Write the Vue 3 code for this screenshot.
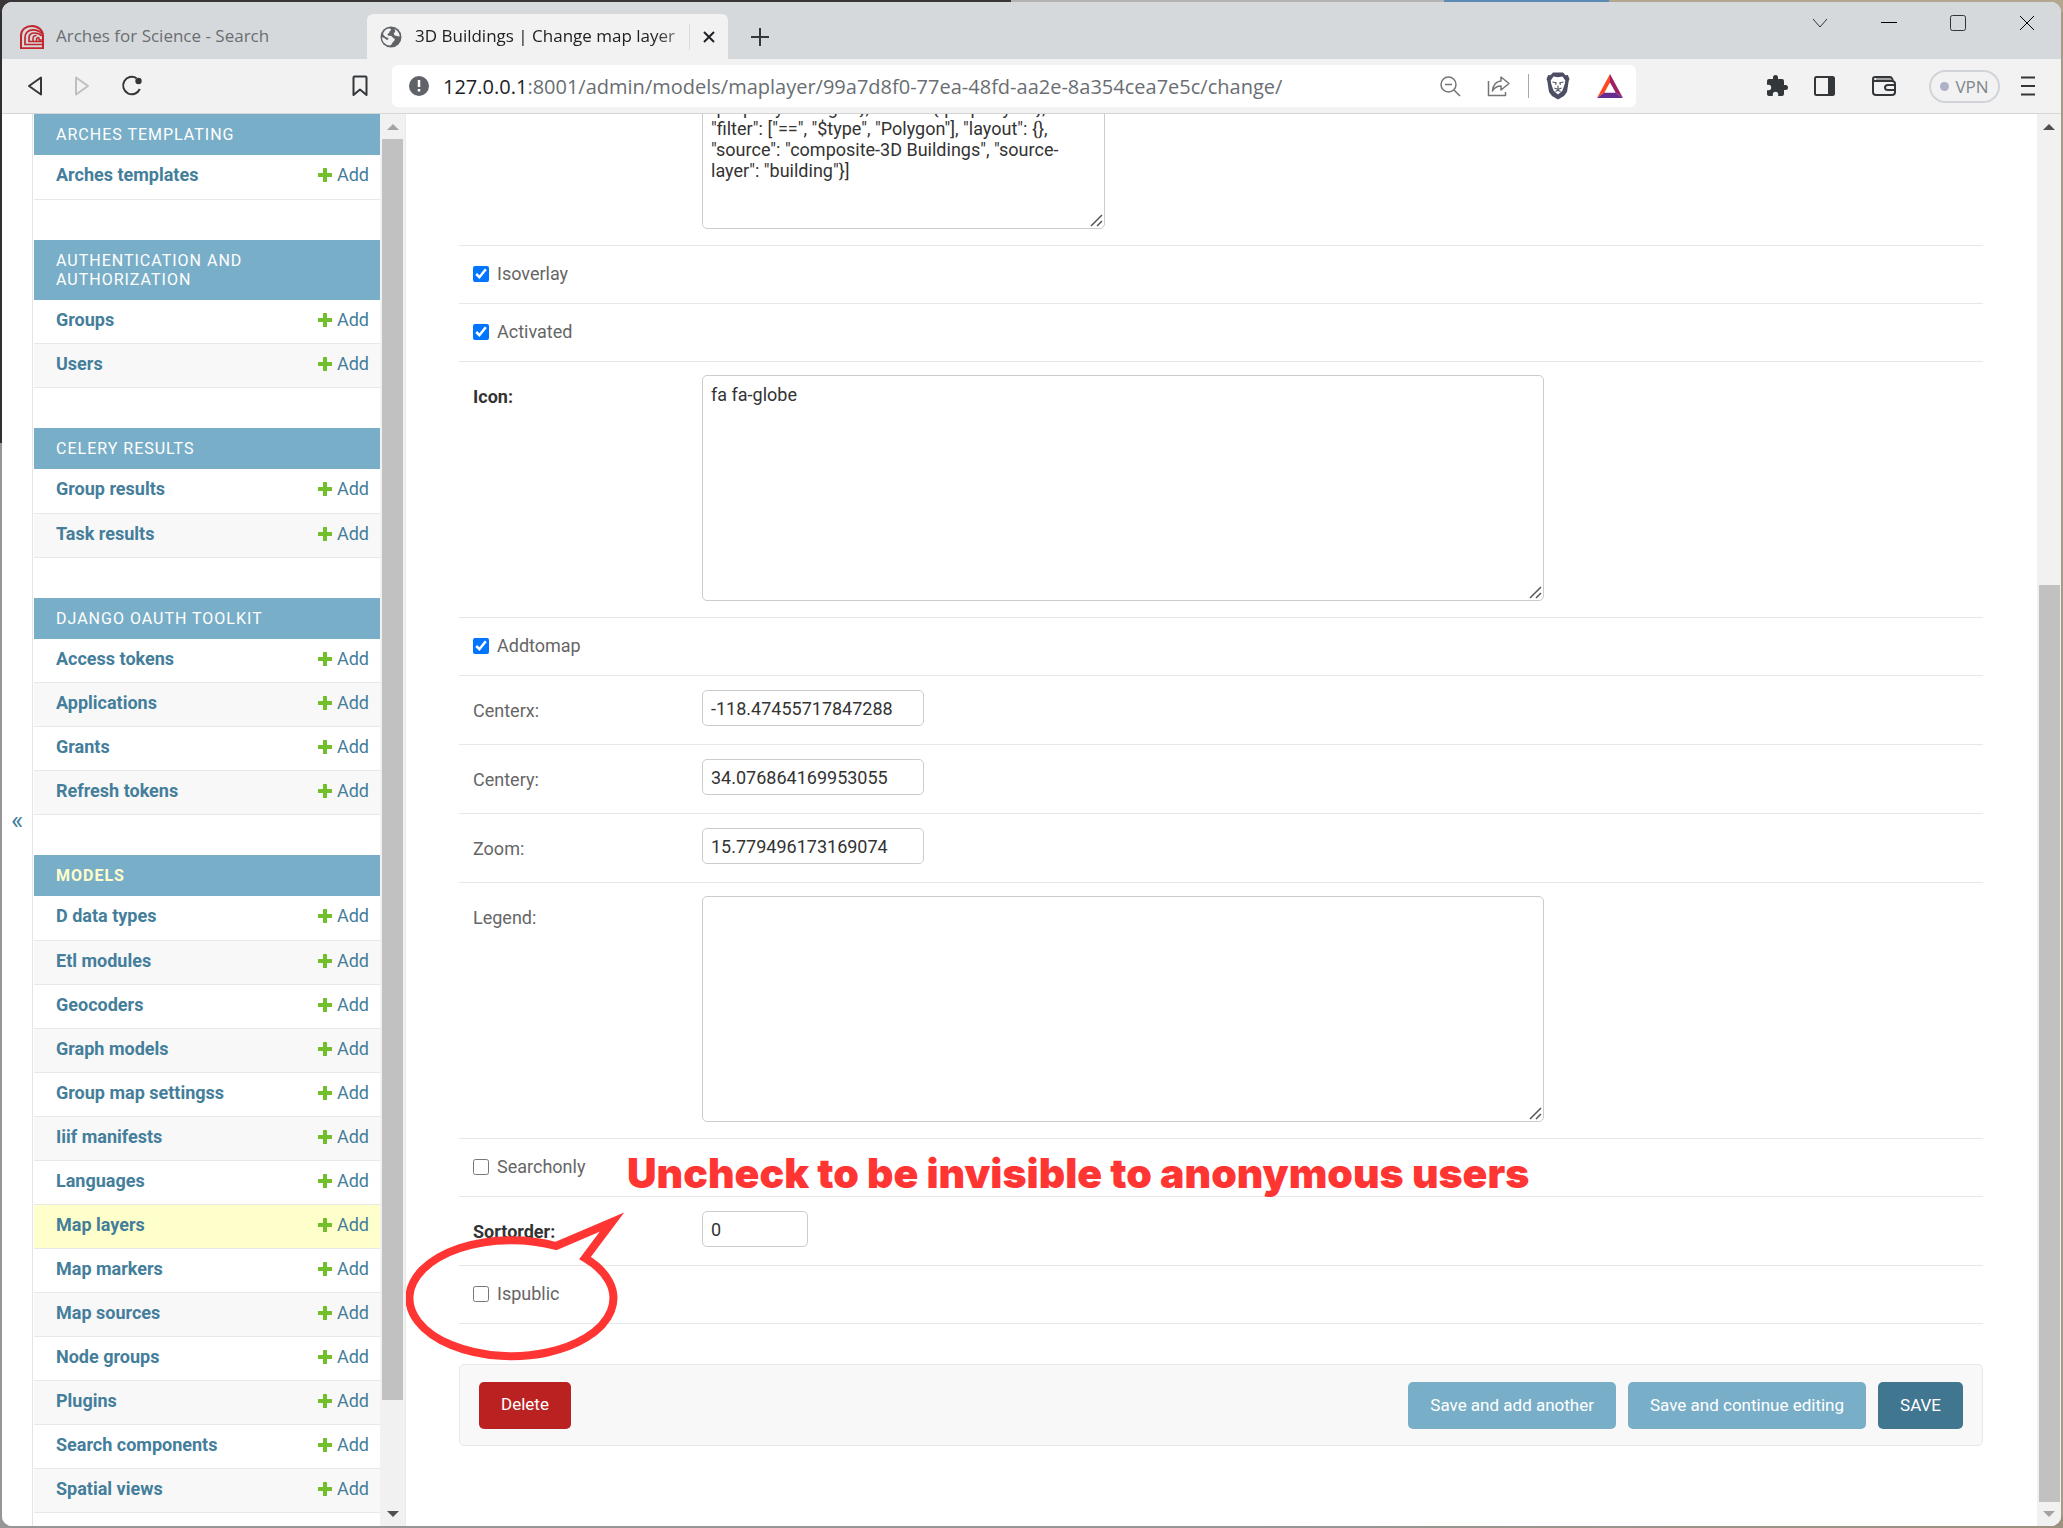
<script setup>
const modules = [
  { name: 'Arches templating', models: ['Arches templates'] },
  { name: 'Authentication and Authorization', models: ['Groups', 'Users'] },
  { name: 'Celery Results', models: ['Group results', 'Task results'] },
  { name: 'Django OAuth Toolkit', models: ['Access tokens', 'Applications', 'Grants', 'Refresh tokens'] },
  {
    name: 'Models',
    current: true,
    models: [
      'D data types', 'Etl modules', 'Geocoders', 'Graph models', 'Group map settingss',
      'Iiif manifests', 'Languages', 'Map layers', 'Map markers', 'Map sources',
      'Node groups', 'Plugins', 'Search components', 'Spatial views',
    ],
  },
]
const currentModel = 'Map layers'

const layerdefinitions = `"property": "height"}, "base": {"property": 1},
"filter": ["==", "$type", "Polygon"], "layout": {}, "source": "composite-3D Buildings", "source-layer": "building"}]`

const fields = [
  { id: 'isoverlay', label: 'Isoverlay', type: 'check', value: true },
  { id: 'activated', label: 'Activated', type: 'check', value: true },
  { id: 'icon', label: 'Icon:', type: 'area', value: 'fa fa-globe', required: true },
  { id: 'addtomap', label: 'Addtomap', type: 'check', value: true },
  { id: 'centerx', label: 'Centerx:', type: 'text', value: '-118.47455717847288' },
  { id: 'centery', label: 'Centery:', type: 'text', value: '34.076864169953055' },
  { id: 'zoom', label: 'Zoom:', type: 'text', value: '15.779496173169074' },
  { id: 'legend', label: 'Legend:', type: 'area', value: '' },
  { id: 'searchonly', label: 'Searchonly', type: 'check', value: false, note: true },
  { id: 'sortorder', label: 'Sortorder:', type: 'text', value: '0', required: true, short: true },
  { id: 'ispublic', label: 'Ispublic', type: 'check', value: false, bubble: true },
]
</script>

<template>
  <div class="desktop">
    <div class="window">
      <header class="tabbar">
        <a class="tab idle" href="#">
          <svg width="24" height="24" viewBox="0 0 24 24" fill="none" stroke="#c4262e">
            <path d="M1 23.300V11C1 4.500 6 1 12 1s11 4 11 10v12.300z" stroke-width="2" />
            <path d="M22 19.500H5V12.500C5 8 8.500 4.800 13 4.800c4 0 7 1.500 9 4" stroke-width="1.700" />
            <path d="M22 16.500H9V13C9 10 11 8 14.500 8c3 0 5.500 1 7.500 3" stroke-width="1.700" />
            <path d="M13 16v-2.500c0-2 1.500-3 3.500-3M16.500 16v-1.500c0-1.500 1-2 2.500-2M19 12.500v2.500h3" stroke-width="1.500" />
          </svg>
          <span>Arches for Science - Search</span>
        </a>
        <div class="tab active">
          <svg width="22" height="22" viewBox="0 0 22 22">
            <circle cx="11" cy="11" r="10.500" fill="#5f6368" />
            <path d="M8.300 2.500c2 0 2.700.3 2.700 1.200 0 1.200-1.700 1.400-1.700 2.600 0 1.300-1.800 1-1.800 2.200 0 1 .8 1.300 2.500 1.300 2.200 0 2.500 2 3.700 2.500 1.500.5 1.300 2.200 0 2.900-1.500.8-1.600 3.600-3.700 4.200C5 19.300 2 15.500 2 11.300c1.500.2 2.800.9 3.800 2 1 .9 2.700.5 2.700-.5 0-1.300-2.300-1.200-3.500-2.300-1-.9-1.600-1.800-2-2.500.6-2.500 2.800-4.800 5.300-5.500zM14.500 3c3 1.300 5 4 5.200 7.200-1 .6-1.700-.2-2.600-.2-1.500 0-3.300-.6-3.300-2.200 0-1.300 1.500-1.400 1.500-2.500 0-.8-.8-1-.8-2.300z" fill="#f2f2f2" />
          </svg>
          <span class="tab-title">3D Buildings | Change map layer</span>
          <i class="tab-sep"></i>
          <button class="bare" aria-label="Close tab">
            <svg width="12" height="12" viewBox="0 0 12 12" stroke="#202124" stroke-width="2"><path d="M1 1l10 10M11 1L1 11" /></svg>
          </button>
        </div>
        <button class="bare new-tab" aria-label="New tab">
          <svg width="18" height="18" viewBox="0 0 18 18" stroke="#33373a" stroke-width="2"><path d="M9 0v18M0 9h18" /></svg>
        </button>
        <div class="win-controls">
          <button class="bare" aria-label="Search tabs"><svg width="16" height="16" viewBox="0 0 16 16" fill="none" stroke="#333"><path d="M1 4l7 8 7-8" /></svg></button>
          <button class="bare" aria-label="Minimize"><svg width="16" height="16" viewBox="0 0 16 16" stroke="#000"><path d="M0 7.500h16" /></svg></button>
          <button class="bare" aria-label="Maximize"><svg width="16" height="16" viewBox="0 0 16 16" fill="none" stroke="#333"><rect x="0.500" y="0.500" width="15" height="15" rx="2" /></svg></button>
          <button class="bare" aria-label="Close window"><svg width="16" height="16" viewBox="0 0 16 16" stroke="#000"><path d="M1 1l14 14M15 1L1 15" /></svg></button>
        </div>
      </header>

      <div class="toolbar">
        <div class="nav">
          <button class="bare" aria-label="Back"><svg width="16" height="22" viewBox="0 0 16 22" fill="none" stroke="#33373a" stroke-width="2" stroke-linejoin="round"><path d="M14 2.500v17L2 11z" /></svg></button>
          <button class="bare" aria-label="Forward"><svg width="16" height="22" viewBox="0 0 16 22" fill="none" stroke="#bdbfc1" stroke-width="2" stroke-linejoin="round"><path d="M2 2.500v17L14 11z" /></svg></button>
          <button class="bare" aria-label="Reload"><svg width="22" height="22" viewBox="0 0 22 22" fill="none" stroke="#33373a" stroke-width="2"><path d="M15.500 3.200A8.700 8.700 0 1 0 18.800 14" /><circle cx="17.500" cy="6" r="3.200" fill="#33373a" stroke="none" /></svg></button>
        </div>
        <button class="bare" aria-label="Bookmark"><svg width="16" height="22" viewBox="0 0 16 22" fill="none" stroke="#33373a" stroke-width="2" stroke-linejoin="round"><path d="M1.500 2.500q0-1 1-1h11q1 0 1 1V20L8 14.500 1.500 20z" /></svg></button>
        <div class="address">
          <svg width="20" height="20" viewBox="0 0 20 20"><circle cx="10" cy="10" r="10" fill="#5f6368" /><path d="M10 4v7M10 13v2.500" stroke="#fff" stroke-width="2.500" /></svg>
          <div class="url"><b>127.0.0.1</b>:8001/admin/models/maplayer/99a7d8f0-77ea-48fd-aa2e-8a354cea7e5c/change/</div>
          <svg class="ic-zoom" width="21" height="21" viewBox="0 0 21 21" fill="none" stroke="#757575" stroke-width="1.500"><circle cx="8.500" cy="8.500" r="7.500" /><path d="M14 14l6 6M5 8.500h7" /></svg>
          <svg class="ic-share" width="24" height="22" viewBox="0 0 24 22" fill="none" stroke="#757575" stroke-width="1.500" stroke-linejoin="round"><path d="M1.500 6v14.500h17V17M14 2l8 6.500-8 6.500v-4c-4 0-6.500 1.500-8.500 5C6 10 8.500 6.500 14 6z" /></svg>
          <i class="addr-sep"></i>
          <svg class="ic-brave" width="24" height="28" viewBox="0 0 24 28">
            <path d="M7 .5h10l2.500 2.700 2.300-.2L23.500 7l-.8 2L21 20l-3 4-6 3.500L6 24l-3-4L1.300 9 .5 7l1.700-4 2.300.2z" fill="#4c4e63" />
            <path d="M7.500 4.500L12 5.300l4.500-.8 2.800 4-.5 3.200-1.800 5.300-.8 2L12 22.500 7.800 19 7 17 5.200 11.700l-.5-3.200z" fill="#fff" />
            <path d="M6.500 10l3.700.8-.7 2M17.500 10l-3.700.8.7 2M8.500 16l3.500 1.500 3.500-1.500M12 13.500v4M9.500 19.500L12 18.300l2.500 1.200" fill="none" stroke="#4c4e63" stroke-width="1.100" />
          </svg>
          <svg class="ic-bat" width="26" height="24" viewBox="0 0 26 24"><path d="M13 0v8.500L7.500 18.500 0 24z" fill="#ff4724" /><path d="M13 0v8.500l5.500 10L26 24z" fill="#9e1f63" /><path d="M0 24l7.500-5.500h11L26 24z" fill="#662d91" /><path d="M13 9l5.200 9.500H7.800z" fill="#fff" /></svg>
        </div>
        <div class="tools">
          <button class="bare" aria-label="Extensions"><svg width="24" height="24" viewBox="0 0 24 24" fill="#33373a"><path d="M20.500 11H19V7a2 2 0 0 0-2-2h-4V3.500a2.500 2.500 0 0 0-5 0V5H4a2 2 0 0 0-2 2v3.800h1.500a2.700 2.700 0 0 1 0 5.400H2V20a2 2 0 0 0 2 2h3.800v-1.500a2.700 2.700 0 0 1 5.400 0V22H17a2 2 0 0 0 2-2v-4h1.500a2.500 2.500 0 0 0 0-5z" /></svg></button>
          <button class="bare" aria-label="Sidebar"><svg width="21" height="20" viewBox="0 0 21 20"><rect x="1" y="1" width="19" height="18" rx="1.500" fill="none" stroke="#33373a" stroke-width="2" /><path d="M14 1h6v18h-6z" fill="#33373a" /></svg></button>
          <button class="bare wallet" aria-label="Wallet"><svg width="24" height="20" viewBox="0 0 24 20" fill="none" stroke="#33373a" stroke-width="2"><path d="M1 4v12q0 3 3 3h16q3 0 3-3V8q0-3-3-3H3Q1 5 1 3t2-2h15q2 0 3 4M23 9h-7q-3 0-3 2.500t3 2.500h7" /><path d="M4 3h15" stroke="#888" stroke-width="1.500" /></svg></button>
          <button class="vpn"><i></i>VPN</button>
          <button class="bare" aria-label="Menu"><svg width="14" height="20" viewBox="0 0 14 20" stroke="#33373a" stroke-width="2"><path d="M0 1.500h14M0 10h14M0 18.500h14" /></svg></button>
        </div>
      </div>

      <div class="page">
        <button class="toggle-nav" aria-label="Toggle navigation">«</button>
        <nav class="sidebar">
          <div class="modules">
            <table v-for="m in modules" :key="m.name" :class="{ current: m.current }">
              <caption><a href="#">{{ m.name }}</a></caption>
              <tbody>
                <tr v-for="name in m.models" :key="name" :class="{ selected: name === currentModel }">
                  <th scope="row"><a href="#">{{ name }}</a></th>
                  <td>
                    <a class="add" href="#">
                      <svg width="14" height="14" viewBox="0 0 14 14" fill="#70bf2b"><path d="M5.500 0h3q.5 0 .5.500V5h4.500q.5 0 .5.500v3q0 .5-.5.500H9v4.500q0 .5-.5.500h-3q-.5 0-.5-.5V9H.5Q0 9 0 8.500v-3Q0 5 .5 5H5V.5Q5 0 5.500 0z" /></svg>
                      Add
                    </a>
                  </td>
                </tr>
              </tbody>
            </table>
          </div>
          <div class="scrollbar side">
            <i class="up faded"></i>
            <div class="track"><div class="thumb"></div></div>
            <i class="down"></i>
          </div>
        </nav>

        <main class="content">
          <form @submit.prevent>
            <div class="row definitions">
              <textarea aria-label="Layerdefinitions" spellcheck="false" :value="layerdefinitions"></textarea>
            </div>
            <div v-for="f in fields" :key="f.id" class="row" :class="f.type">
              <template v-if="f.type === 'check'">
                <input :id="f.id" type="checkbox" :checked="f.value">
                <label :for="f.id">{{ f.label }}</label>
              </template>
              <template v-else>
                <label :for="f.id" :class="{ required: f.required }">{{ f.label }}</label>
                <textarea v-if="f.type === 'area'" :id="f.id" spellcheck="false" :value="f.value"></textarea>
                <input v-else :id="f.id" type="text" :class="{ short: f.short }" :value="f.value">
              </template>
              <strong v-if="f.note" class="note">Uncheck to be invisible to anonymous users</strong>
              <svg v-if="f.bubble" class="bubble" width="224" height="152" viewBox="0 0 224 152" fill="none" stroke="#ff3533" stroke-width="8" stroke-miterlimit="12">
                <path d="M152 36L208 12 181 48A102 58 0 1 1 152 36z" />
              </svg>
            </div>
            <div class="submit-row">
              <a class="btn delete" href="#">Delete</a>
              <button class="btn light">Save and add another</button>
              <button class="btn light">Save and continue editing</button>
              <button class="btn save">SAVE</button>
            </div>
          </form>
        </main>

        <div class="scrollbar main-bar">
          <i class="up"></i>
          <div class="track"><div class="thumb"></div></div>
          <i class="down faded"></i>
        </div>
      </div>
    </div>
  </div>
</template>

<style>
body {
  margin: 0;
  font-family: Roboto, "Liberation Sans", sans-serif;
}
</style>

<style scoped>
* { box-sizing: border-box; }
a { color: inherit; text-decoration: none; }
svg { display: block; flex: none; }

.desktop {
  height: 100vh;
  padding: 2px;
  background:
    linear-gradient(90deg, #3a3638 0 49%, #b3b3b3 49% 70%, #5b8bb5 70% 78%, #b3a791 78%) top / 100% 12px no-repeat,
    linear-gradient(#303032 0 29%, #969696 29%) left / 12px 100% no-repeat,
    linear-gradient(90deg, #969696 60%, #9c9180) bottom / 100% 12px no-repeat,
    #a39a8a;
}
.window {
  display: flex;
  flex-direction: column;
  height: 100%;
  overflow: hidden;
  border-radius: 10px;
  background: #fff;
}
.bare { display: grid; place-items: center; padding: 0; border: 0; background: none; }

.tabbar {
  display: flex;
  align-items: flex-end;
  flex: none;
  height: 57px;
  background: #d5d9dc;
  font-family: "Segoe UI", "Open Sans", sans-serif;
  font-size: 17px;
}
.tab { display: flex; align-items: center; height: 45px; white-space: nowrap; }
.tab span { padding-bottom: 2px; }
.idle { width: 365px; gap: 12px; padding-left: 18px; color: #6a6e72; }
.active {
  width: 361px;
  gap: 13px;
  padding: 0 13px;
  border-radius: 6px 6px 0 0;
  background: #f2f2f2;
  color: #202124;
}
.tab-title {
  flex: 1;
  font-weight: 500;
  mask-image: linear-gradient(90deg, #000 88%, #0006);
}
.tab-sep { width: 1px; height: 26px; margin-left: -10px; background: #dcdcdc; }
.new-tab { width: 64px; height: 45px; }
.win-controls { display: flex; align-self: flex-start; gap: 53px; margin: 13px 26px 0 auto; }

.toolbar {
  display: flex;
  align-items: center;
  flex: none;
  height: 55px;
  padding: 0 26px 0 25px;
  border-bottom: 1px solid #d3d5d7;
  background: #f2f2f2;
}
.nav { display: flex; gap: 31px; width: 325px; }
.address {
  display: flex;
  align-items: center;
  flex: 1;
  height: 42px;
  margin-left: 24px;
  padding: 0 13px 0 17px;
  border-radius: 6px;
  background: #fff;
}
.url {
  flex: 1;
  margin-left: 14px;
  color: #6a6e72;
  font-family: "Segoe UI", "Open Sans", sans-serif;
  font-size: 20px;
  white-space: nowrap;
}
.url b { color: #202124; font-weight: 400; }
.ic-share { margin-left: 26px; }
.addr-sep { width: 1px; height: 24px; margin: 0 17px; background: #a8a8a8; }
.ic-bat { margin-left: 27px; }
.tools { display: flex; align-items: center; margin-left: 129px; }
.tools .bare { margin-right: 25px; }
.tools .wallet { margin: 0 33px 0 12px; }
.tools .bare:last-child { margin: 0 0 0 21px; }
.vpn {
  display: flex;
  align-items: center;
  justify-content: center;
  gap: 6px;
  width: 71px;
  height: 33px;
  padding: 0;
  border: 2px solid #d0d4d9;
  border-radius: 17px;
  background: none;
  color: #80868b;
  font-family: "Segoe UI", "Open Sans", sans-serif;
  font-size: 17px;
}
.vpn i { width: 9px; height: 9px; border-radius: 50%; background: #aeb1c8; }

.page { display: flex; flex: 1; min-height: 0; }
.toggle-nav {
  width: 31px;
  padding: 0;
  border: 0;
  border-right: 1px solid #e4e4e4;
  background: #fff;
  color: #447e9b;
  font-family: Roboto, sans-serif;
  font-size: 26px;
}
.sidebar {
  display: flex;
  width: 373px;
  padding-left: 1px;
  overflow: hidden;
  border-right: 1px solid #eaeaea;
}
.modules { flex: 1; overflow: hidden; }
.modules table { width: 100%; margin-bottom: 40px; border-collapse: collapse; font-size: 18px; }
caption {
  padding: 11px 80px 11px 22px;
  background: #79aec8;
  color: #fff;
  font-size: 16px;
  line-height: 19px;
  letter-spacing: 1px;
  text-align: left;
  text-transform: uppercase;
}
.current caption { color: #ffc; font-weight: 700; }
tr { border-bottom: 1px solid #e8e8e8; background: #fff; }
tr:nth-child(even) { background: #f8f8f8; }
tr.selected { background: #ffc; }
th, td { height: 44px; padding: 0 11px 3px 22px; color: #447e9b; line-height: 20px; }
th { font-weight: 700; text-align: left; white-space: nowrap; }
.add { display: flex; align-items: center; justify-content: flex-end; gap: 5px; }

.scrollbar { display: flex; flex-direction: column; flex: none; align-items: center; background: #f1f1f1; }
.side { width: 25px; }
.main-bar { width: 24px; }
.track { flex: 1; margin: 9px 0; }
.thumb { width: 21px; background: #c1c1c1; }
.side .thumb { height: calc(100% - 102px); }
.main-bar .track { display: flex; align-items: flex-end; }
.main-bar .thumb { height: calc(100% - 446px); }
.up, .down { width: 0; height: 0; border: 6px solid transparent; }
.up { margin-top: 10px; border-top: 0; border-bottom-color: #505050; }
.down { margin-bottom: 9px; border-bottom: 0; border-top-color: #505050; }
.up.faded { border-bottom-color: #a3a3a3; }
.down.faded { border-top-color: #a3a3a3; }

.content { flex: 1; min-width: 0; overflow: hidden; padding: 0 54px 0 53px; }
.row {
  position: relative;
  display: flex;
  align-items: flex-start;
  border-bottom: 1px solid #e8e8e8;
  padding-left: 14px;
  color: #666;
  font-size: 18px;
  line-height: 20px;
}
.row textarea, .row input[type="text"] {
  width: 842px;
  margin: 0;
  padding: 8px;
  border: 1px solid #ccc;
  border-radius: 5px;
  background: #fff;
  color: #333;
  font-family: Roboto, "Liberation Sans", sans-serif;
  font-size: 18px;
}
.row textarea { height: 226px; overflow: hidden; line-height: 21px; }
.row textarea::-webkit-resizer {
  background: url("data:image/svg+xml,%3Csvg xmlns='http://www.w3.org/2000/svg' width='15' height='15'%3E%3Cpath d='M2 13L13 2M8 13l5-5' stroke='%23555' stroke-width='1.500'/%3E%3C/svg%3E") center no-repeat;
}
.row input[type="text"] { width: 222px; height: 36px; }
.row input[type="text"].short { width: 106px; }
.definitions { height: 132px; }
.definitions textarea { width: 403px; height: 141px; margin: -26px 0 0 229px; }
.area { padding-top: 13px; padding-bottom: 16px; }
.text { padding-top: 14px; padding-bottom: 18px; }
.area label, .text label { width: 229px; }
.area label { padding-top: 12px; }
.text label { padding-top: 11px; }
.required { color: #333; font-weight: 700; }
.check { align-items: center; gap: 8px; height: 58px; padding-bottom: 2px; }
.check input { width: 16px; height: 16px; margin: 0; accent-color: #0075ff; }
.note {
  position: absolute;
  left: 168px;
  top: 12px;
  color: #ff3533;
  font-family: "Arial Black", Inter, sans-serif;
  font-size: 41px;
  font-weight: 900;
  line-height: 44px;
  white-space: nowrap;
}
.bubble { position: absolute; left: -55px; top: -56px; z-index: 1; }

.submit-row {
  display: flex;
  gap: 12px;
  margin-top: 40px;
  padding: 17px 19px 16px;
  border: 1px solid #e8e8e8;
  border-radius: 5px;
  background: #f8f8f8;
}
.btn {
  height: 47px;
  padding: 0 22px;
  border: 0;
  border-radius: 5px;
  color: #fff;
  font-family: Roboto, "Liberation Sans", sans-serif;
  font-size: 17px;
  line-height: 45px;
}
.light { background: #79aec8; }
.save { background: #417690; }
.delete { margin-right: auto; background: #ba2121; }
</style>
